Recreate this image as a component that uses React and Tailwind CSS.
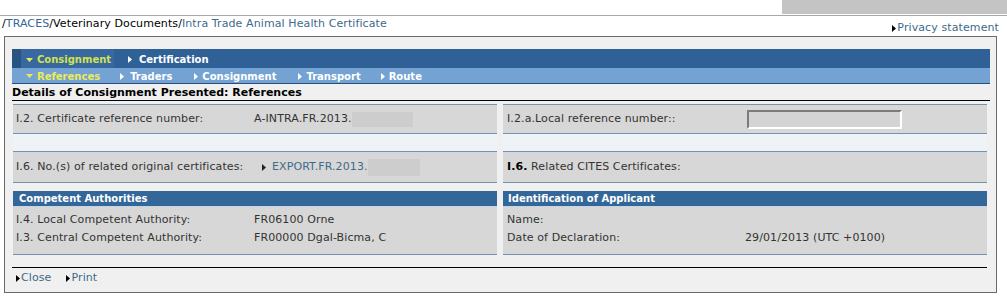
import React from 'react';

const font = "font-['DejaVu_Sans','Liberation_Sans',Verdana,sans-serif]";

function Arrow({ className = 'fill-black' }) {
  return (
    <svg width="4" height="7" viewBox="0 0 4 7" className={className}>
      <path d="M0 0L4 3.5L0 7z" />
    </svg>
  );
}

function TabArrow({ open }) {
  if (open) {
    return (
      <svg width="7" height="4" viewBox="0 0 7 4" className="fill-[#e4ea5c]">
        <path d="M0 0L7 0L3.5 4z" />
      </svg>
    );
  }
  return (
    <svg width="4" height="7" viewBox="0 0 4 7" className="fill-white">
      <path d="M0 0L4 3.5L0 7z" />
    </svg>
  );
}

function Tab({ label, open, yellow, gap = 'gap-[6px]', className = '' }) {
  return (
    <div className={`flex items-center font-bold text-[10px] tracking-normal ${gap} ${className}`}>
      <TabArrow open={open} />
      <span className={open ? yellow : 'text-white'}>{label}</span>
    </div>
  );
}

function Redacted({ w }) {
  return <span className={`inline-block h-[15px] bg-[#cdcdcd] ${w}`} />;
}

export default function App() {
  return (
    <div className={`w-[1007px] h-[301px] bg-white text-[11px] tracking-[0.1px] text-[#333] ${font}`}>
      {/* top strip */}
      <div className="flex h-[16px] border-b border-[#a9a9a9]">
        <div className="flex-1" />
        <div className="w-[225px] h-[14px] bg-[#c4c4c4]" />
      </div>

      {/* breadcrumb */}
      <div className="flex justify-between h-[20px] pl-[2px] pr-[8px]">
        <div className="mt-[1px] leading-[14px]">
          <span className="text-black">/</span>
          <span className="text-[#336699]">TRACES</span>
          <span className="text-black">/Veterinary Documents/</span>
          <span className="text-[#3d6a8a]">Intra Trade Animal Health Certificate</span>
        </div>
        <div className="mt-[4px] leading-[14px] flex items-center gap-[1px] text-[#3d6a8a]">
          <Arrow />
          <span>Privacy statement</span>
        </div>
      </div>

      {/* main panel */}
      <div className="ml-[4px] w-[993px] h-[257px] border border-[#6a6a6a] bg-[#f0f0f0] pl-[7px] pr-[6px] pt-[12px]">
        {/* tabs */}
        <div className="flex h-[19px] bg-[#2f6196]">
          <div className="w-[9px] bg-[#285484]" />
          <div className="w-[93px] bg-[#3769a0] flex items-center pl-[5px] pt-[2px]">
            <Tab label="Consignment" open yellow="text-[#d4e04e]" gap="gap-[4px]" />
          </div>
          <Tab label="Certification" className="pl-[14px] pt-[2px]" gap="gap-[7px]" />
        </div>
        <div className="flex h-[16px] bg-[#74a2d3] border-b border-[#26507e] pl-[14px] pt-[1px] gap-[20px]">
          <Tab label="References" open yellow="text-[#ecec52]" gap="gap-[4px]" />
          <Tab label="Traders" />
          <Tab label="Consignment" gap="gap-[4px]" className="ml-[2px]" />
          <Tab label="Transport" gap="gap-[4px]" className="ml-[2px]" />
          <Tab label="Route" gap="gap-[4px]" />
        </div>
        <div className="h-[17px] border-b border-black font-bold text-black leading-[17px] tracking-normal">
          Details of Consignment Presented: References
        </div>

        {/* content grid */}
        <div className="grid grid-cols-2 gap-x-[6px] pl-[1px] pr-[3px] mt-[3px]">
          <div className="flex flex-col">
            <div className="h-[30px] flex items-center bg-[#d7d7d7] border-y border-[#7593b1] pl-[3px]">
              <span className="w-[238px]">I.2. Certificate reference number:</span>
              <span className="flex items-center">
                A-INTRA.FR.2013.<Redacted w="w-[61px]" />
              </span>
            </div>
            <div className="h-[17px] bg-[#eef3f8]" />
            <div className="h-[32px] flex items-center bg-[#d7d7d7] border-y border-[#7593b1] pl-[3px]">
              <span className="w-[246px]">I.6. No.(s) of related original certificates:</span>
              <span className="flex items-center gap-[6px] text-[#3d6a8a]">
                <Arrow className="fill-[#222]" />
                <span className="flex items-center">
                  EXPORT.FR.2013.<Redacted w="w-[52px] h-[17px]" />
                </span>
              </span>
            </div>
            <div className="h-[8px]" />
            <div className="h-[16px] bg-[#336699] border-b border-[#c5d5e6] text-white font-bold text-[10px] tracking-normal pl-[6px] leading-[15px]">
              Competent Authorities
            </div>
            <div className="h-[48px] bg-[#d7d7d7] border-b border-[#7593b1] pt-[4px] pl-[3px]">
              <div className="flex h-[18px] items-center">
                <span className="w-[238px]">I.4. Local Competent Authority:</span>
                <span>FR06100 Orne</span>
              </div>
              <div className="flex h-[18px] items-center">
                <span className="w-[238px]">I.3. Central Competent Authority:</span>
                <span>FR00000 Dgal-Bicma, C</span>
              </div>
            </div>
          </div>

          <div className="flex flex-col">
            <div className="h-[30px] flex items-center bg-[#d7d7d7] border-y border-[#7593b1] pl-[4px]">
              <span className="w-[240px]">I.2.a.Local reference number::</span>
              <span className="w-[155px] h-[19px] bg-[#d4d4d4] border-2 border-t-[#7c7c7c] border-l-[#7c7c7c] border-b-white border-r-white" />
            </div>
            <div className="h-[17px] bg-[#eef3f8]" />
            <div className="h-[32px] flex items-center bg-[#d7d7d7] border-y border-[#7593b1] pl-[4px]">
              <span>
                <b className="text-black">I.6.</b> Related CITES Certificates:
              </span>
            </div>
            <div className="h-[8px]" />
            <div className="h-[16px] bg-[#336699] border-b border-[#c5d5e6] text-white font-bold text-[10px] tracking-normal pl-[5px] leading-[15px]">
              Identification of Applicant
            </div>
            <div className="h-[48px] bg-[#d7d7d7] border-b border-[#7593b1] pt-[4px] pl-[4px]">
              <div className="flex h-[18px] items-center">
                <span className="w-[238px]">Name:</span>
              </div>
              <div className="flex h-[18px] items-center">
                <span className="w-[238px]">Date of Declaration:</span>
                <span>29/01/2013 (UTC +0100)</span>
              </div>
            </div>
          </div>
        </div>

        <div className="mt-[12px] h-px bg-black mr-[3px]" />
        <div className="h-[20px] flex items-center gap-[15px] pl-[4px] text-[#3d6a8a]">
          <span className="flex items-center gap-[1px]">
            <Arrow />
            Close
          </span>
          <span className="flex items-center gap-[1px]">
            <Arrow />
            Print
          </span>
        </div>
      </div>
    </div>
  );
}
